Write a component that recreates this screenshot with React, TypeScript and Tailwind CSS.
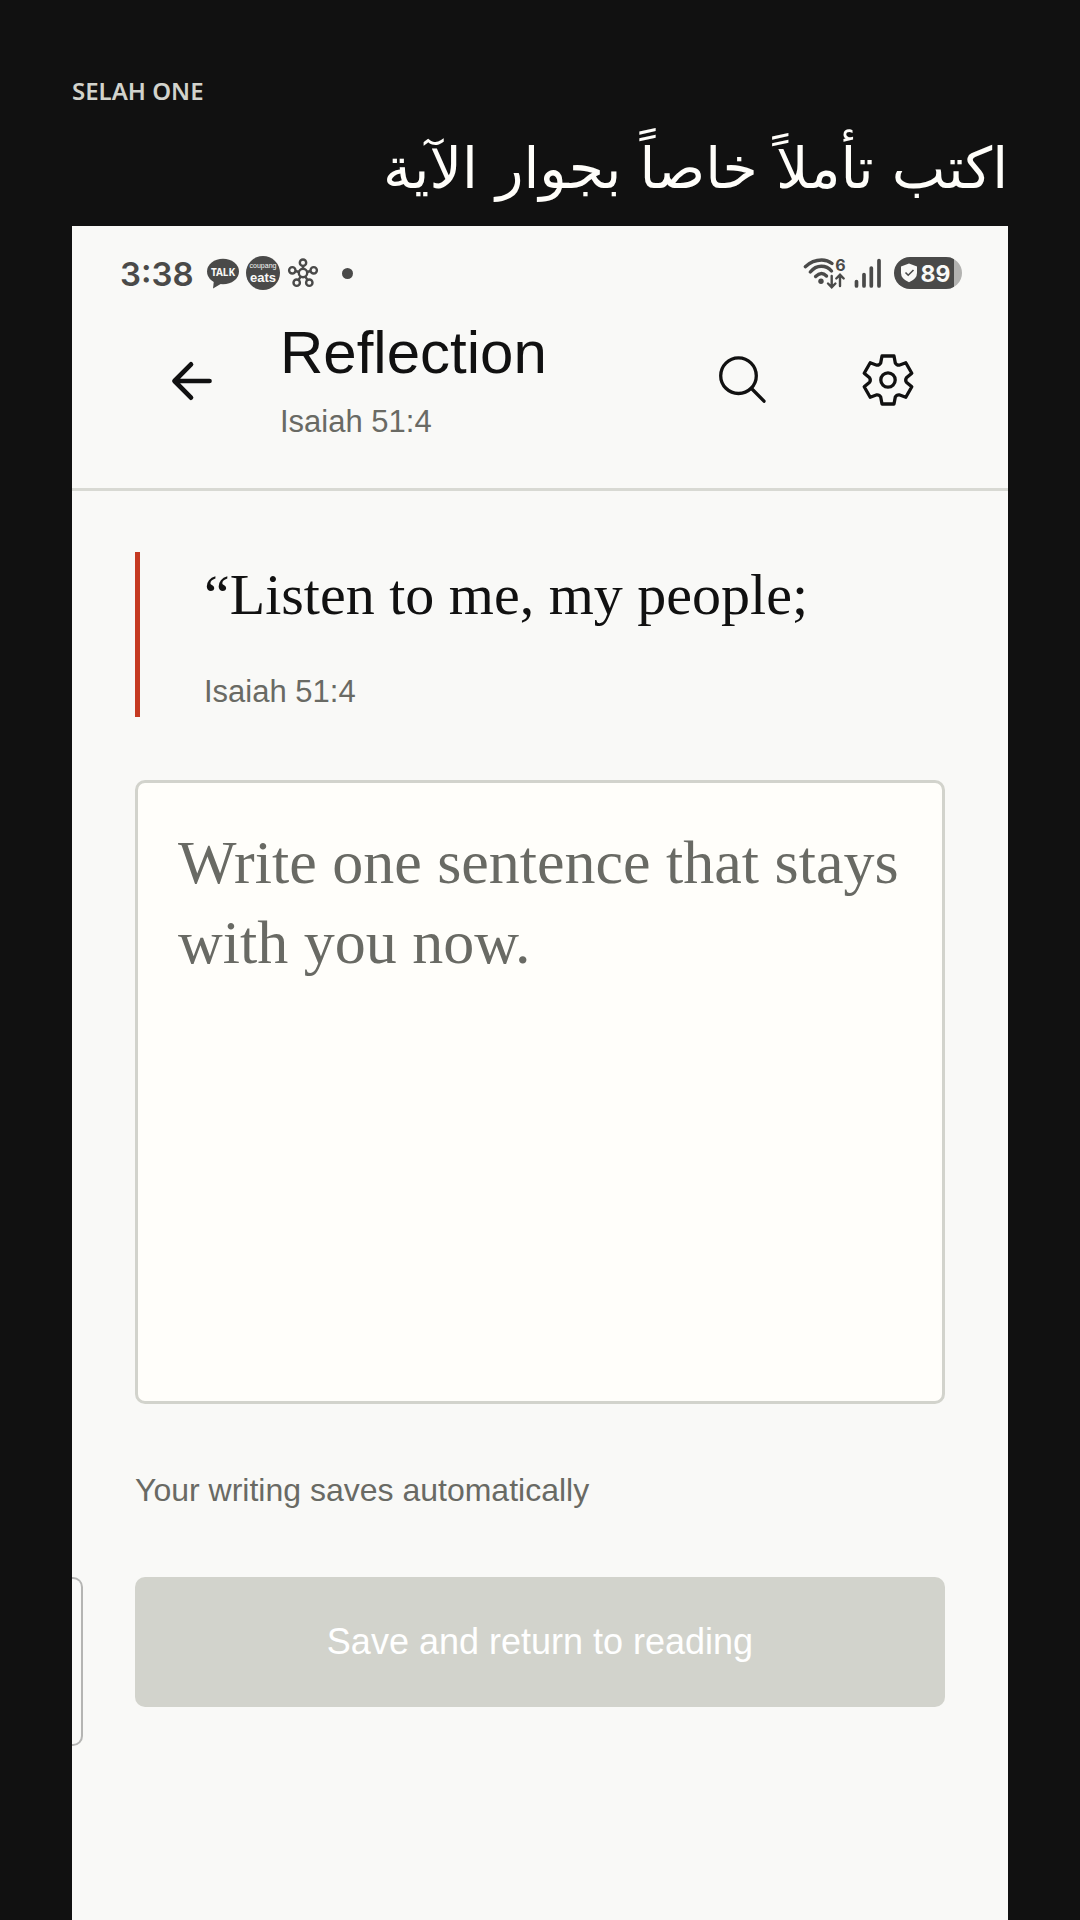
function StatusBar() {
  return (
    <div className="flex h-[94px] items-center justify-between pl-12 pr-[46px] text-[#4a4a49]">
      <div className="flex items-center">
        <span className="pt-0.5 font-[Inter,sans-serif] text-[33px] leading-10 font-semibold">3:38</span>
        <svg className="ml-3 h-[34px] w-[34px]" viewBox="0 0 34 34" fill="currentColor" role="img" aria-label="Talk message">
          <ellipse cx="17" cy="15.5" rx="16" ry="12.8" />
          <path d="M8 24 7 32.5 18 26Z" />
          <text x="17" y="19.5" textAnchor="middle" fill="#f9f9f7" className="font-['Noto_Sans',sans-serif] text-[10px] font-bold">TALK</text>
        </svg>
        <svg className="ml-1.5 h-[34px] w-[34px]" viewBox="0 0 34 34" fill="currentColor" role="img" aria-label="Coupang Eats">
          <circle cx="17" cy="17" r="17" />
          <text x="17" y="12" textAnchor="middle" fill="#f9f9f7" className="font-['Liberation_Sans',sans-serif] text-[7px]">coupang</text>
          <text x="17" y="26" textAnchor="middle" fill="#f9f9f7" className="font-['Liberation_Sans',sans-serif] text-[13px] font-bold">eats</text>
        </svg>
        <svg className="ml-1.5 h-[34px] w-[34px]" viewBox="-17 -17 34 34" fill="none" stroke="currentColor" strokeWidth="2.4" aria-hidden="true">
          <circle r="4.2" />
          <circle cy="-10.3" r="3.2" />
          <circle cx="-10.7" cy="-2.7" r="3.2" />
          <circle cx="10.7" cy="-2.7" r="3.2" />
          <circle cx="-6.3" cy="9.7" r="3.2" />
          <circle cx="6.3" cy="9.7" r="3.2" />
          <path d="M0-7.2V-4M-7.6-2-4-1M7.6-2 4-1M-4.5 7.1-2.4 3.6M4.5 7.1 2.4 3.6" />
        </svg>
        <span className="ml-[22px] size-[11px] rounded-full bg-[#4a4a49]" />
      </div>
      <div className="flex items-center gap-2">
        <svg className="h-[34px] w-[44px]" viewBox="0 0 44 34" fill="none" stroke="currentColor" strokeWidth="3.4" strokeLinecap="round" role="img" aria-label="Wi-Fi 6">
          <path d="M3.3 10.7Q10.5 4 19.7 4 25.5 4 30 7.5" />
          <path d="M8.3 16Q13 10.2 19.3 10.2 25.5 10.2 29.5 15" />
          <path d="M13.6 20.5Q19.3 14.8 24.5 20" />
          <circle cx="19" cy="25.3" r="2.7" fill="currentColor" stroke="none" />
          <path strokeWidth="2.4" d="M29.7 20V31M26 27.5 29.7 31.2 33.4 27.5M38 30V19M34.3 22.5 38 18.8 41.700 22.5" />
          <text x="38.5" y="15" textAnchor="middle" fill="currentColor" stroke="none" className="font-[Inter,sans-serif] text-[16px] font-bold">6</text>
        </svg>
        <svg className="h-[34px] w-[28px]" viewBox="0 0 28 34" stroke="currentColor" strokeWidth="3.7" strokeLinecap="round" role="img" aria-label="Signal">
          <path d="M2.5 25.5V30M10 18.5V30M17.3 12V30M25 4.5V30" />
        </svg>
        <svg className="ml-1 h-[32px] w-[68px]" viewBox="0 0 68 32" role="img" aria-label="Battery 89 percent">
          <path d="M52 0A16 16 0 0 1 52 32Z" fill="#b3b3b1" />
          <path d="M16 0H52Q57 0 60 2.2V29.8Q57 32 52 32H16A16 16 0 0 1 16 0Z" fill="currentColor" />
          <path d="M15 6.5 23 9.5V16Q23 22 15 25.3 7 22 7 16V9.5Z" fill="#f9f9f7" />
          <path d="M11.5 15.5 14.2 18.2 19.5 13" fill="none" stroke="currentColor" strokeWidth="1.6" />
          <text x="41.5" y="24.5" textAnchor="middle" fill="#f9f9f7" className="font-[Inter,sans-serif] text-[23px] font-bold">89</text>
        </svg>
      </div>
    </div>
  );
}

function Header() {
  return (
    <header className="flex items-center border-b-[3px] border-[#d8d9d3] px-23 pb-[46px] text-[#111111]">
      <button type="button" aria-label="Back" className="size-14">
        <svg viewBox="0 0 56 56" fill="none" stroke="currentColor" strokeWidth="4.7" strokeLinecap="round" strokeLinejoin="round">
          <path d="M45.5 28H11M27 11.3 10.5 28 27 44.7" />
        </svg>
      </button>
      <div className="ml-15 grow">
        <h2 className="text-[60px] leading-[66px]">Reflection</h2>
        <p className="mt-4 text-[31px] leading-10 text-[#696a64]">Isaiah 51:4</p>
      </div>
      <div className="flex gap-[90px]">
        <button type="button" aria-label="Search" className="size-14">
          <svg viewBox="0 0 56 56" fill="none" stroke="currentColor" strokeWidth="3.3" strokeLinecap="round">
            <circle cx="24.5" cy="22.700" r="17.8" />
            <path d="M37.5 35.5 50 48.2" />
          </svg>
        </button>
        <button type="button" aria-label="Settings" className="size-14">
          <svg viewBox="-28 -27 56 56" fill="none" stroke="currentColor" strokeWidth="3.3" strokeLinejoin="round">
            <circle r="7.2" />
            <path d="M-6-24H6L7.3-17Q8.5-14.7 11.1-14.8L17.8-17.2 23.8-6.8 18.4-2.2Q17 0 18.4 2.2L23.8 6.8 17.8 17.2 11.1 14.8Q8.5 14.7 7.3 17L6 24H-6L-7.3 17Q-8.5 14.7-11.1 14.8L-17.8 17.2-23.8 6.8-18.4 2.2Q-17 0-18.4-2.2L-23.8-6.8-17.8-17.2-11.1-14.8Q-8.5-14.7-7.3-17Z" />
          </svg>
        </button>
      </div>
    </header>
  );
}

export default function App() {
  return (
    <main className="flex min-h-screen flex-col bg-[#111111] px-18 pt-[75px]">
      <p className="font-['Noto_Sans',sans-serif] text-[24px] leading-8 font-semibold text-[#d2d3cc]">SELAH ONE</p>
      <h1 dir="rtl" lang="ar" className="mt-[21px] mb-[18px] font-['DejaVu_Sans',sans-serif] text-[57px] leading-[80px] text-[#fffefa]">
        اكتب تأملاً خاصاً بجوار الآية
      </h1>

      <div className="flex grow flex-col overflow-hidden bg-[#f9f9f7] font-['Liberation_Sans',Arial,sans-serif]">
        <StatusBar />
        <Header />

        <section className="flex flex-col px-[63px] pt-[61px] pb-16">
          <blockquote className="border-l-[5px] border-[#c53a22] pb-[5px] pl-16">
            <p className="font-['Liberation_Serif',serif] text-[58px] leading-[86px] text-[#111111]">“Listen to me, my people;</p>
            <footer className="mt-[34px] text-[31px] leading-10 text-[#696a64]">Isaiah 51:4</footer>
          </blockquote>

          <textarea
            aria-label="Your reflection"
            placeholder="Write one sentence that stays with you now."
            className="mt-[63px] block h-[624px] w-full resize-none rounded-[10px] border-[3px] border-[#d2d3cc] bg-[#fffefa] px-10 py-[39px] font-['Liberation_Serif',serif] text-[62px] leading-[80px] text-[#111111] placeholder:text-[#696a64]"
          />

          <p className="mt-[66px] text-[32px] leading-10 text-[#696a64]">Your writing saves automatically</p>

          <div className="relative mt-[67px]">
            {/* edge panel handle */}
            <div className="absolute top-0 -left-[63px] h-[169px] w-[11px] rounded-r-[10px] border-2 border-l-0 border-[#b5b5b3]" />
            <button type="button" disabled className="h-[130px] w-full rounded-[10px] bg-[#d2d3cc] text-[36px] text-white">
              Save and return to reading
            </button>
          </div>
        </section>
      </div>
    </main>
  );
}
